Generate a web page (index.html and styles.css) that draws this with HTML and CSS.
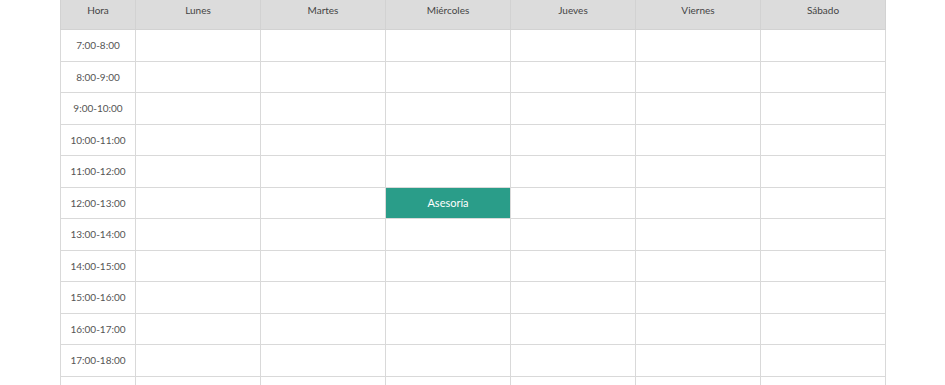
FILE: index.html
```html
<!DOCTYPE html>
<html lang="es">
<head>
<meta charset="utf-8">
<link rel="stylesheet" href="styles.css">
</head>
<body>
<div class="page">
<table class="schedule">
  <colgroup>
    <col class="c-hora"><col class="c-day"><col class="c-day"><col class="c-day"><col class="c-day"><col class="c-day"><col class="c-day">
  </colgroup>
  <thead>
    <tr><th>Hora</th><th>Lunes</th><th>Martes</th><th>Miércoles</th><th>Jueves</th><th>Viernes</th><th>Sábado</th></tr>
  </thead>
  <tbody>
    <tr><td>7:00-8:00</td><td></td><td></td><td></td><td></td><td></td><td></td></tr>
    <tr><td>8:00-9:00</td><td></td><td></td><td></td><td></td><td></td><td></td></tr>
    <tr><td>9:00-10:00</td><td></td><td></td><td></td><td></td><td></td><td></td></tr>
    <tr><td>10:00-11:00</td><td></td><td></td><td></td><td></td><td></td><td></td></tr>
    <tr><td>11:00-12:00</td><td></td><td></td><td></td><td></td><td></td><td></td></tr>
    <tr><td>12:00-13:00</td><td></td><td></td><td class="event">Asesoría</td><td></td><td></td><td></td></tr>
    <tr><td>13:00-14:00</td><td></td><td></td><td></td><td></td><td></td><td></td></tr>
    <tr><td>14:00-15:00</td><td></td><td></td><td></td><td></td><td></td><td></td></tr>
    <tr><td>15:00-16:00</td><td></td><td></td><td></td><td></td><td></td><td></td></tr>
    <tr><td>16:00-17:00</td><td></td><td></td><td></td><td></td><td></td><td></td></tr>
    <tr><td>17:00-18:00</td><td></td><td></td><td></td><td></td><td></td><td></td></tr>
    <tr><td></td><td></td><td></td><td></td><td></td><td></td><td></td></tr>
  </tbody>
</table>
</div>
</body>
</html>
```
FILE: styles.css
```css
html, body {
  margin: 0;
  padding: 0;
  background: #ffffff;
  overflow: hidden;
}
.page {
  padding-left: 60px;
  font-family: Lato, "Noto Sans", sans-serif;
  color: #555555;
}
.schedule {
  border-collapse: collapse;
  table-layout: fixed;
  width: 826px;
  font-size: 10px;
}
.c-hora { width: 75px; }
.c-day { width: 125px; }
.schedule th {
  background: #dcdcdc;
  font-weight: normal;
  color: #444444;
  height: 29px;
  line-height: 20px;
  padding: 0 0 9px 0;
  border: 1px solid #d2d2d2;
  border-top: none;
  box-sizing: border-box;
  vertical-align: middle;
}
.schedule td {
  height: 31.5px;
  padding: 0;
  text-align: center;
  border: 1px solid #d9d9d9;
  box-sizing: border-box;
  vertical-align: middle;
}
.schedule td.event {
  background: #2a9d89;
  color: #ffffff;
  font-size: 11px;
}
```
